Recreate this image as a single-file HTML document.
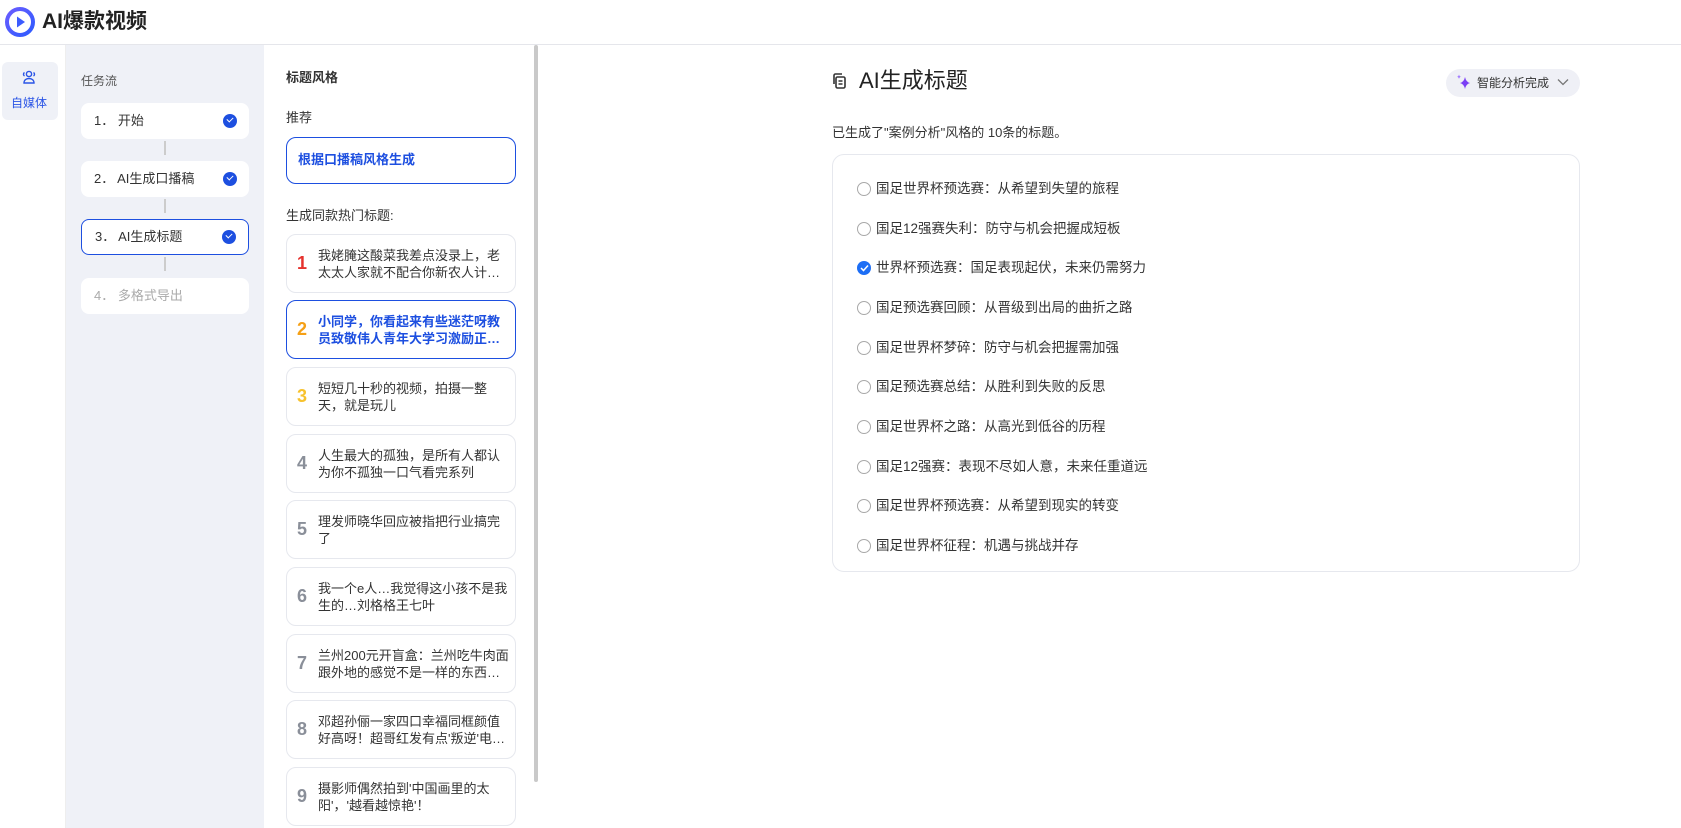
<!DOCTYPE html>
<html><head><meta charset="utf-8"><style>
*{box-sizing:border-box;margin:0;padding:0}
body{width:1681px;height:828px;overflow:hidden;background:#fff;font-family:"Liberation Sans","Noto Sans CJK SC",sans-serif;color:#333;position:relative}
.abs{position:absolute}
.hdr{left:0;top:0;width:1681px;height:45px;border-bottom:1px solid #e5e6eb;background:#fff}
.rail{left:0;top:45px;width:66px;height:783px;background:#fff;border-right:1px solid #eee}
.task{left:66px;top:45px;width:198px;height:783px;background:#eff1f7}
.tc{position:absolute;left:15px;width:168px;height:36px;background:#fff;border-radius:8px;font-size:13px;line-height:36px;padding-left:13px;color:#333}
.tc .ck{position:absolute;right:12px;top:11px;width:14px;height:14px;border-radius:50%;background:#1d4fe0}
.tc .ck:after{content:"";position:absolute;left:4px;top:3px;width:5px;height:3px;border-left:1.5px solid #fff;border-bottom:1.5px solid #fff;transform:rotate(-45deg)}
.ln{position:absolute;left:98px;width:2px;height:14px;background:#ccc}
.mid{left:264px;top:45px;width:272px;height:783px;background:#fff}
.card{position:absolute;left:22px;width:230px;height:59px;border:1px solid #e6e8ee;border-radius:10px;background:#fff}
.card .n{position:absolute;left:10px;top:0;line-height:57px;font-size:18px;font-weight:bold;color:#8a8f99}
.card .t{position:absolute;left:31px;top:12px;width:196px;font-size:13px;line-height:17px;color:#333;white-space:nowrap;overflow:hidden}
.row{position:absolute;left:24px;font-size:13.5px;color:#333;height:20px;line-height:20px}
.rd{position:absolute;left:0;top:3px;width:14px;height:14px;border:1px solid #a8a8a8;border-radius:50%}
.row span{position:absolute;left:19px;white-space:nowrap}
</style></head><body>
<div class="abs hdr">
 <svg class="abs" style="left:5px;top:7px" width="30" height="30" viewBox="0 0 30 30"><defs><linearGradient id="g" x1="0" y1="0" x2="1" y2="1"><stop offset="0" stop-color="#6a5cff"/><stop offset="1" stop-color="#2d5bff"/></linearGradient></defs><circle cx="15" cy="15" r="13" fill="none" stroke="url(#g)" stroke-width="4"/><path d="M12 9.5 L20 15 L12 20.5Z" fill="#3b5bff"/></svg>
 <div class="abs" style="left:42px;top:8px;font-size:21px;font-weight:700;color:#222;line-height:28px">AI爆款视频</div>
</div>
<div class="abs rail">
 <div class="abs" style="left:2px;top:17px;width:56px;height:58px;background:#eff1f7;border-radius:6px"></div>
 <svg class="abs" style="left:21px;top:25px" width="16" height="14" viewBox="0 0 16 14" fill="none" stroke="#2b55e6" stroke-width="1.4"><circle cx="8" cy="4" r="2.6"/><path d="M3 13c0-3 2.2-4.5 5-4.5s5 1.5 5 4.5z"/><path d="M3.5 2.5a2 2 0 0 0 0 3.5M12.5 2.5a2 2 0 0 1 0 3.5"/></svg>
 <div class="abs" style="left:11px;top:49px;font-size:12px;color:#2b55e6">自媒体</div>
</div>
<div class="abs task">
 <div class="abs" style="left:15px;top:27px;font-size:12px;color:#555">任务流</div>
 <div class="tc" style="top:58px">1． 开始<i class="ck"></i></div>
 <div class="ln" style="top:96px"></div>
 <div class="tc" style="top:116px">2． AI生成口播稿<i class="ck"></i></div>
 <div class="ln" style="top:154px"></div>
 <div class="tc" style="top:174px;border:1.5px solid #1d4fe0;line-height:33px">3． AI生成标题<i class="ck" style="top:10px"></i></div>
 <div class="ln" style="top:212px"></div>
 <div class="tc" style="top:233px;color:#aaa">4． 多格式导出</div>
</div>
<div class="abs mid">
 <div class="abs" style="left:22px;top:22px;font-size:13px;font-weight:bold;color:#333">标题风格</div>
 <div class="abs" style="left:22px;top:62px;font-size:13px;color:#333">推荐</div>
 <div class="abs" style="left:22px;top:92px;width:230px;height:47px;border:1.5px solid #1d4fe0;border-radius:10px;font-size:13px;font-weight:bold;color:#1d4fe0;line-height:44px;padding-left:11px">根据口播稿风格生成</div>
 <div class="abs" style="left:22px;top:160px;font-size:13px;color:#333">生成同款热门标题:</div>
 <div class="card" style="top:189px"><div class="n" style="color:#e5322d">1</div><div class="t">我姥腌这酸菜我差点没录上，老<br>太太人家就不配合你新农人计…</div></div>
 <div class="card" style="top:255px;border:1.5px solid #1d4fe0"><div class="n" style="color:#f5a016">2</div><div class="t" style="color:#1d4fe0;font-weight:bold">小同学，你看起来有些迷茫呀教<br>员致敬伟人青年大学习激励正…</div></div>
 <div class="card" style="top:322px"><div class="n" style="color:#f7c22e">3</div><div class="t">短短几十秒的视频，拍摄一整<br>天，就是玩儿</div></div>
 <div class="card" style="top:389px"><div class="n">4</div><div class="t">人生最大的孤独，是所有人都认<br>为你不孤独一口气看完系列</div></div>
 <div class="card" style="top:455px"><div class="n">5</div><div class="t">理发师晓华回应被指把行业搞完<br>了</div></div>
 <div class="card" style="top:522px"><div class="n">6</div><div class="t">我一个e人…我觉得这小孩不是我<br>生的…刘格格王七叶</div></div>
 <div class="card" style="top:589px"><div class="n">7</div><div class="t">兰州200元开盲盒：兰州吃牛肉面<br>跟外地的感觉不是一样的东西…</div></div>
 <div class="card" style="top:655px"><div class="n">8</div><div class="t">邓超孙俪一家四口幸福同框颜值<br>好高呀！超哥红发有点'叛逆'电…</div></div>
 <div class="card" style="top:722px"><div class="n">9</div><div class="t">摄影师偶然拍到'中国画里的太<br>阳'，'越看越惊艳'！</div></div>
 <div class="abs" style="left:270px;top:0;width:4px;height:737px;background:#c9c9c9;border-radius:2px"></div>
</div>
<svg class="abs" style="left:832px;top:73px" width="15" height="16" viewBox="0 0 15 16" fill="none" stroke="#333" stroke-width="1.6"><rect x="4" y="4" width="9" height="11" rx="1.5"/><path d="M2 11V2.5A1.5 1.5 0 0 1 3.5 1H10"/><path d="M6.5 8h4M6.5 11h4"/></svg>
<div class="abs" style="left:859px;top:67px;font-size:22px;color:#222;line-height:28px">AI生成标题</div>
<div class="abs" style="left:1446px;top:69px;width:134px;height:28px;background:#eff0f6;border-radius:14px"></div>
<svg class="abs" style="left:1455px;top:73px" width="18" height="18" viewBox="0 0 18 18"><path d="M10 4 Q11 9 15 10 Q11 11 10 16 Q9 11 5 10 Q9 9 10 4Z" fill="#7b3ff5"/><path d="M4 1.5 Q4.4 3.4 6 3.8 Q4.4 4.2 4 6 Q3.6 4.2 2 3.8 Q3.6 3.4 4 1.5Z" fill="#a27cff"/></svg>
<div class="abs" style="left:1477px;top:74px;font-size:12px;color:#333;line-height:18px">智能分析完成</div>
<svg class="abs" style="left:1557px;top:78px" width="12" height="8" viewBox="0 0 12 8" fill="none" stroke="#777" stroke-width="1.3"><path d="M1 1.5l5 5 5-5"/></svg>
<div class="abs" style="left:832px;top:122px;font-size:13px;color:#333">已生成了"案例分析"风格的 10条的标题。</div>
<div class="abs" style="left:832px;top:154px;width:748px;height:418px;border:1px solid #e6e8ee;border-radius:12px">
 <div class="row" style="top:24px"><i class="rd"></i><span>国足世界杯预选赛：从希望到失望的旅程</span></div>
 <div class="row" style="top:64px"><i class="rd"></i><span>国足12强赛失利：防守与机会把握成短板</span></div>
 <div class="row" style="top:103px"><i class="rd" style="border:none;background:#1d6ef5"></i><svg class="abs" style="left:3px;top:6px" width="9" height="8" viewBox="0 0 9 8" fill="none" stroke="#fff" stroke-width="1.5"><path d="M1 4l2.5 2.5L8 1.5"/></svg><span>世界杯预选赛：国足表现起伏，未来仍需努力</span></div>
 <div class="row" style="top:143px"><i class="rd"></i><span>国足预选赛回顾：从晋级到出局的曲折之路</span></div>
 <div class="row" style="top:183px"><i class="rd"></i><span>国足世界杯梦碎：防守与机会把握需加强</span></div>
 <div class="row" style="top:222px"><i class="rd"></i><span>国足预选赛总结：从胜利到失败的反思</span></div>
 <div class="row" style="top:262px"><i class="rd"></i><span>国足世界杯之路：从高光到低谷的历程</span></div>
 <div class="row" style="top:302px"><i class="rd"></i><span>国足12强赛：表现不尽如人意，未来任重道远</span></div>
 <div class="row" style="top:341px"><i class="rd"></i><span>国足世界杯预选赛：从希望到现实的转变</span></div>
 <div class="row" style="top:381px"><i class="rd"></i><span>国足世界杯征程：机遇与挑战并存</span></div>
</div>
</body></html>
